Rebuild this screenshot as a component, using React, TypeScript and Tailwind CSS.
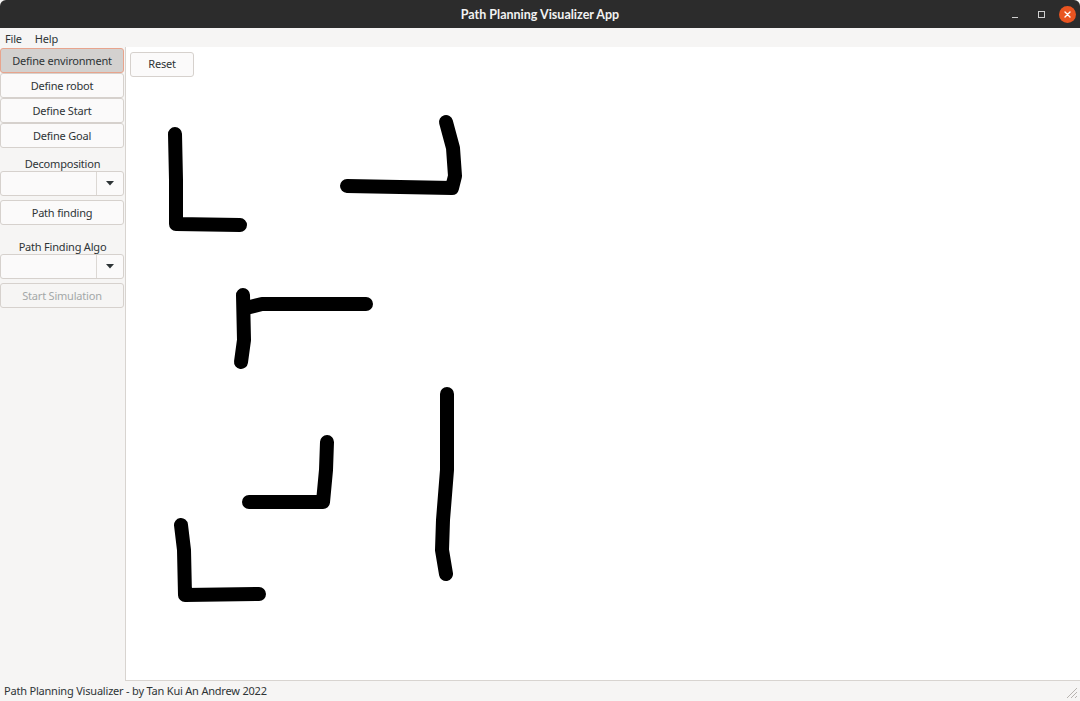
import React from 'react'

const STROKES: [number, number][][] = [
  [[175, 134], [176, 180], [176, 224], [240, 225]],
  [[347, 186], [400, 187], [452, 188], [455, 176], [453, 148], [446, 122]],
  [[243, 295], [244, 340], [241, 362]],
  [[246, 308], [262, 304], [366, 304]],
  [[447, 394], [447, 470], [443, 520], [442, 550], [446, 574]],
  [[327, 442], [326, 470], [323, 502], [249, 502]],
  [[181, 525], [184, 550], [185, 595], [259, 594]],
]

// canvas origin in page coords
const OX = 126
const OY = 47

function SideButton({ label, active, disabled }: { label: string; active?: boolean; disabled?: boolean }) {
  return (
    <button
      className={`h-[25px] w-[124px] rounded-[3px] border text-[11px] leading-none tracking-[-0.2px] ${
        active
          ? 'border-[#e8a48d] bg-[#d3d1cf] text-[#2e3436]'
          : disabled
            ? 'border-[#d6d1cd] bg-[#f6f5f4] text-[#a4a8a8]'
            : 'border-[#d6d1cd] bg-[#fbfafa] text-[#2e3436]'
      }`}
    >
      {label}
    </button>
  )
}

function Combo() {
  return (
    <div className="flex h-[25px] w-[124px] rounded-[3px] border border-[#d6d1cd] bg-[#fbfafa]">
      <div className="flex-1" />
      <div className="flex w-[27px] items-center justify-center border-l border-[#dcd8d4]">
        <svg width="8" height="5" viewBox="0 0 8 5">
          <path d="M0 0 L8 0 L4 4.5 Z" fill="#2e3436" />
        </svg>
      </div>
    </div>
  )
}

export default function App() {
  return (
    <div
      className="flex h-[701px] w-[1080px] flex-col overflow-hidden bg-[#f6f5f4] text-[11px] tracking-[-0.2px] text-[#2e3436]"
      style={{ fontFamily: '"Noto Sans", Lato, sans-serif' }}
    >
      {/* title bar */}
      <div className="relative flex h-[28px] items-center justify-center rounded-t-[6px] bg-[#2c2c2c] pt-[2px]">
        <span
          className="text-[12.5px] font-bold tracking-normal text-[#f2f2f2]"
          style={{ fontFamily: 'Lato, sans-serif' }}
        >
          Path Planning Visualizer App
        </span>
        <div className="absolute right-[4px] top-0 flex h-[28px] items-center gap-[10px]">
          <div className="flex h-[16px] w-[16px] items-end justify-center pb-[4px]">
            <div className="h-px w-[6px] bg-[#cfcfcf]" />
          </div>
          <div className="flex h-[16px] w-[16px] items-center justify-center">
            <div className="h-[7px] w-[7px] border border-[#cfcfcf]" />
          </div>
          <div className="flex h-[17px] w-[17px] items-center justify-center rounded-full bg-[#e95420]">
            <svg width="7" height="7" viewBox="0 0 7 7">
              <path d="M1 1 L6 6 M6 1 L1 6" stroke="#fff" strokeWidth="1.4" strokeLinecap="round" />
            </svg>
          </div>
        </div>
      </div>

      {/* menu bar */}
      <div className="flex h-[19px] items-center gap-[13px] px-[5px] pt-[3px]">
        <span>File</span>
        <span>Help</span>
      </div>

      {/* main */}
      <div className="flex min-h-0 flex-1">
        <div className="flex w-[125px] flex-col pt-[1px]">
          <SideButton label="Define environment" active />
          <SideButton label="Define robot" />
          <SideButton label="Define Start" />
          <SideButton label="Define Goal" />
          <div className="mt-[9px] text-center leading-[14px]">Decomposition</div>
          <Combo />
          <div className="mt-[4px]">
            <SideButton label="Path finding" />
          </div>
          <div className="mt-[15px] text-center leading-[14px]">Path Finding Algo</div>
          <Combo />
          <div className="mt-[4px]">
            <SideButton label="Start Simulation" disabled />
          </div>
        </div>

        <div className="relative flex-1 border-b border-l border-[#d8d4d0] bg-white">
          <div className="flex px-[4px] pt-[5px]">
            <button className="h-[25px] w-[64px] rounded-[3px] border border-[#d6d1cd] bg-[#fbfafa] text-[11px] text-[#2e3436]">
              Reset
            </button>
          </div>
          <svg className="pointer-events-none absolute left-0 top-0" width="954" height="634">
            {STROKES.map((pts, i) => (
              <polyline
                key={i}
                points={pts.map(([x, y]) => `${x - OX},${y - OY}`).join(' ')}
                fill="none"
                stroke="#000"
                strokeWidth="14"
                strokeLinecap="round"
                strokeLinejoin="round"
              />
            ))}
          </svg>
        </div>
      </div>

      {/* status bar */}
      <div className="relative flex h-[20px] items-center px-[4px]">
        <span>Path Planning Visualizer - by Tan Kui An Andrew 2022</span>
        <svg className="absolute bottom-[2px] right-[2px]" width="12" height="12" viewBox="0 0 12 12">
          <path d="M11 1 L1 11 M11 5 L5 11 M11 9 L9 11" stroke="#b8b4b0" strokeWidth="1" />
        </svg>
      </div>
    </div>
  )
}
